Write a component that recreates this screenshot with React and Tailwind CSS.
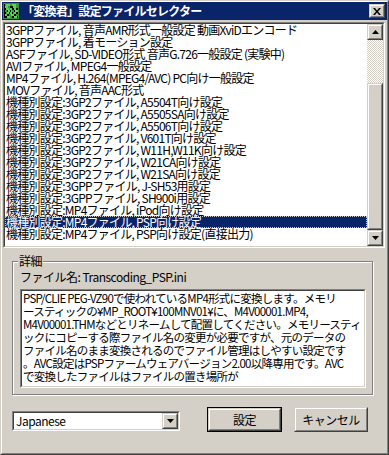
// App.jsx
// 「変換君」設定ファイルセレクター – Win2000 style dialog

import React from 'react'

const sunkenOuter = "border border-t-[#808080] border-l-[#808080] border-r-white border-b-white"
const sunkenInner = "border border-t-[#404040] border-l-[#404040] border-r-[#d4d0c8] border-b-[#d4d0c8]"
const raisedOuter = "border border-t-[#d4d0c8] border-l-[#d4d0c8] border-r-[#404040] border-b-[#404040]"
const raisedInner = "border border-t-white border-l-white border-r-[#808080] border-b-[#808080]"

const items = [
  '3GPPファイル, 音声AMR形式一般設定 動画XviDエンコード',
  '3GPPファイル, 着モーション設定',
  'ASFファイル, SD-VIDEO形式 音声G.726一般設定 (実験中)',
  'AVIファイル, MPEG4一般設定',
  'MP4ファイル, H.264(MPEG4/AVC) PC向け一般設定',
  'MOVファイル, 音声AAC形式',
  '機種別設定:3GP2ファイル, A5504T向け設定',
  '機種別設定:3GP2ファイル, A5505SA向け設定',
  '機種別設定:3GP2ファイル, A5506T向け設定',
  '機種別設定:3GP2ファイル, V601T向け設定',
  '機種別設定:3GP2ファイル, W11H,W11K向け設定',
  '機種別設定:3GP2ファイル, W21CA向け設定',
  '機種別設定:3GP2ファイル, W21SA向け設定',
  '機種別設定:3GPPファイル, J-SH53用設定',
  '機種別設定:3GPPファイル, SH900i用設定',
  '機種別設定:MP4ファイル, iPod向け設定',
  '機種別設定:MP4ファイル, PSP向け設定',
  '機種別設定:MP4ファイル, PSP向け設定(直接出力)',
]
const selected = 16

const description = [
  'PSP/CLIE PEG-VZ90で使われているMP4形式に変換します。メモリ',
  'ースティックの¥MP_ROOT¥100MNV01¥に、M4V00001.MP4,',
  'M4V00001.THMなどとリネームして配置してください。メモリースティ',
  'ックにコピーする際ファイル名の変更が必要ですが、元のデータの',
  'ファイル名のまま変換されるのでファイル管理はしやすい設定です',
  '。AVC設定はPSPファームウェアバージョン2.00以降専用です。AVC',
  'で変換したファイルはファイルの置き場所が',
]

function Arrow({ up }) {
  return (
    <svg width="7" height="4" viewBox="0 0 7 4">
      <path d={up ? 'M3.5 0 L7 4 L0 4 Z' : 'M0 0 L7 0 L3.5 4 Z'} fill="#000" />
    </svg>
  )
}

function ScrollButton({ up }) {
  return (
    <div className={`${raisedOuter} w-[16px] h-[16px]`}>
      <div className={`${raisedInner} h-full flex items-center justify-center bg-[#d4d0c8]`}>
        <Arrow up={up} />
      </div>
    </div>
  )
}

function AppIcon() {
  // small green/black pixel icon
  const cells = [
    [1, 1], [2, 1], [4, 1], [6, 1], [8, 1], [10, 1], [12, 1],
    [1, 3], [3, 3], [4, 3], [9, 3], [11, 3], [12, 3],
    [2, 5], [3, 5], [5, 5], [6, 5], [10, 5],
    [1, 7], [4, 7], [7, 7], [8, 7], [11, 7], [12, 7],
    [2, 9], [3, 9], [6, 9], [9, 9], [10, 9],
    [1, 11], [5, 11], [7, 11], [8, 11], [12, 11],
    [3, 13], [4, 13], [6, 13], [10, 13], [11, 13],
  ]
  return (
    <svg width="16" height="16" viewBox="0 0 16 16">
      <rect width="16" height="16" fill="#000" />
      <rect x="0.5" y="0.5" width="15" height="15" fill="none" stroke="#3c8c3c" />
      {cells.map(([x, y], i) => (
        <rect key={i} x={x + 1} y={y} width="2" height="2" fill={i % 3 ? '#5ad25a' : '#2e9e2e'} />
      ))}
    </svg>
  )
}

export default function App() {
  return (
    <div className="w-[389px] h-[455px] font-['Noto_Sans_CJK_JP',sans-serif] text-[12px] tracking-[-0.5px] text-black overflow-hidden">
      <div className={`${raisedOuter} w-full h-full bg-[#d4d0c8]`}>
        <div className={`${raisedInner} w-full h-full flex flex-col`}>
          {/* title bar */}
          <div className="h-[18px] bg-[#0a246a] flex items-center pl-[1px] pr-[2px]">
            <AppIcon />
            <span className="ml-[3px] text-white font-bold leading-[18px] whitespace-nowrap tracking-[-0.75px]">「変換君」設定ファイルセレクター</span>
            <div className={`${raisedOuter} ml-auto w-[16px] h-[14px]`}>
              <div className={`${raisedInner} h-full bg-[#d4d0c8] flex items-center justify-center`}>
                <svg width="8" height="7" viewBox="0 0 8 7">
                  <path d="M0 0 L2 0 L4 2.5 L6 0 L8 0 L5 3.5 L8 7 L6 7 L4 4.5 L2 7 L0 7 L3 3.5 Z" fill="#000" />
                </svg>
              </div>
            </div>
          </div>

          {/* list box */}
          <div className={`${sunkenOuter} mt-[2px] ml-[1px] w-[382px] h-[226px]`}>
            <div className={`${sunkenInner} h-full bg-white flex`}>
              <div className="flex-1 overflow-hidden tracking-[-0.75px]">
                {items.map((t, i) => (
                  <div
                    key={i}
                    className={
                      i === selected
                        ? "h-[12px] leading-[12px] pl-[1px] whitespace-nowrap bg-[#0a246a] text-white outline-1 outline-dotted outline-[#c8c8c8] -outline-offset-1"
                        : "h-[12px] leading-[12px] pl-[1px] whitespace-nowrap"
                    }
                  >
                    {t}
                  </div>
                ))}
              </div>
              <div className="w-[16px] flex flex-col">
                <ScrollButton up />
                <div className="h-[43px] bg-[repeating-conic-gradient(#d4d0c8_0_25%,#ffffff_0_50%)] bg-[length:2px_2px]" />
                <div className={`${raisedOuter} flex-1`}>
                  <div className={`${raisedInner} h-full bg-[#d4d0c8]`} />
                </div>
                <ScrollButton />
              </div>
            </div>
          </div>

          {/* group box */}
          <div className="relative mt-[13px] ml-[10px] w-[361px] h-[134px] border border-[#808080] shadow-[inset_1px_1px_0_#fff,1px_1px_0_#fff]">
            <span className="absolute left-[5px] -top-[8px] px-[1px] bg-[#d4d0c8] leading-[14px]">詳細</span>
            <div className="pl-[7px] pt-[8px] leading-[14px] whitespace-nowrap">ファイル名: Transcoding_PSP.ini</div>
            <div className={`${sunkenOuter} ml-[7px] mt-[5px] w-[346px] h-[99px]`}>
              <div className={`${sunkenInner} h-full bg-white pl-[1px] pt-[1px] overflow-hidden text-[11.5px] tracking-[-0.75px]`}>
                {description.map((l, i) => (
                  <div key={i} className="leading-[13px] whitespace-nowrap">{l}</div>
                ))}
              </div>
            </div>
          </div>

          {/* bottom row */}
          <div className="mt-[12px] ml-[10px] flex items-start">
            <div className={`${sunkenOuter} mt-[4px] w-[168px] h-[20px]`}>
              <div className={`${sunkenInner} h-full bg-white flex items-center`}>
                <span className="pl-[2px] leading-[14px] flex-1">Japanese</span>
                <div className={`${raisedOuter} w-[16px] h-full`}>
                  <div className={`${raisedInner} h-full bg-[#d4d0c8] flex items-center justify-center`}>
                    <Arrow />
                  </div>
                </div>
              </div>
            </div>
            <div className="ml-[27px] w-[75px] h-[25px] border border-black">
              <div className={`${raisedOuter} h-full`}>
                <div className={`${raisedInner} h-full bg-[#d4d0c8] flex items-center justify-center`}>設定</div>
              </div>
            </div>
            <div className={`${raisedOuter} ml-[12px] w-[74px] h-[25px]`}>
              <div className={`${raisedInner} h-full bg-[#d4d0c8] flex items-center justify-center`}>キャンセル</div>
            </div>
          </div>
        </div>
      </div>
    </div>
  )
}
